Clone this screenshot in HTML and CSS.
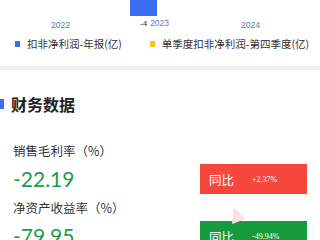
FILE: index.html
```html
<!DOCTYPE html>
<html>
<head>
<meta charset="utf-8">
<link rel="stylesheet" href="styles.css">
</head>
<body>
<div class="chart">
  <div class="plot">
    <div class="col"><div class="xlabel">2022</div></div>
    <div class="col mid">
      <div class="bar"></div>
      <div class="xrow"><span class="neg">-4</span><span class="xlabel">2023</span></div>
    </div>
    <div class="col"><div class="xlabel">2024</div></div>
  </div>
  <div class="legend">
    <div class="item"><span class="sq blue"></span>扣非净利润-年报(亿)</div>
    <div class="item"><span class="sq yellow"></span>单季度扣非净利润-第四季度(亿)</div>
  </div>
</div>
<div class="sep"></div>
<div class="section">
  <h2 class="title">财务数据</h2>
  <div class="metric">
    <div class="name">销售毛利率（%）</div>
    <div class="row">
      <div class="value">-22.19</div>
      <div class="badge up"><span class="tb">同比</span><span class="pct">+2.37%</span></div>
    </div>
  </div>
  <div class="metric">
    <div class="name">净资产收益率（%）</div>
    <div class="row">
      <div class="value">-79.95</div>
      <div class="badge down"><span class="tb">同比</span><span class="pct">-49.94%</span></div>
    </div>
  </div>
  <div class="mark"></div>
</div>
</body>
</html>
```
FILE: styles.css
```css
html, body { margin: 0; padding: 0; background: #fff; }
body { width: 320px; height: 240px; overflow: hidden; font-family: "Noto Sans CJK SC", "Noto Sans", sans-serif; position: relative; }
.chart { height: 66px; }
.plot { display: grid; grid-template-columns: 110px 100px 110px; height: 31px; }
.col { display: flex; flex-direction: column; align-items: center; justify-content: flex-end; }
.col:first-child { align-items: flex-start; padding-left: 51px; }
.col:last-child { align-items: flex-start; padding-left: 141px; margin-left: -110px; }
.mid { position: relative; align-items: flex-start; justify-content: flex-start; }
.bar { width: 27px; height: 16px; background: #3b6ff0; margin-left: 20px; }
.xrow { display: flex; align-items: flex-end; margin-left: 30px; margin-top: 1px; }
.neg { font-family: "Liberation Sans", sans-serif; font-size: 8px; color: #333; margin-right: 3px; line-height: 10px; }
.xlabel { font-family: "Liberation Sans", sans-serif; font-size: 8.5px; color: #5b7ab8; line-height: 12px; }
.legend { display: flex; padding-left: 15px; margin-top: 6px; font-size: 10.5px; color: #333; line-height: 14px; }
.item { display: flex; align-items: center; }
.item:last-child { margin-left: 28px; }
.sq { width: 5px; height: 6px; margin-right: 7px; }
.blue { background: #3b6ff0; }
.yellow { background: #f5c518; }
.sep { height: 4px; background: #f2f2f2; }
.section { position: relative; }
.title { margin: 0; font-size: 16px; font-weight: 700; color: #222; line-height: 20px; padding: 0 0 0 11px; margin-top: 24px; position: relative; }
.title::before { content: ""; position: absolute; left: 0; top: 5px; width: 4px; height: 10px; background: #3b6ff0; }
.metric { padding: 0 13px; margin-top: 29px; }
.metric + .metric { margin-top: 6px; }
.name { font-size: 12.5px; color: #333; line-height: 16px; }
.row { display: flex; align-items: center; justify-content: space-between; margin-top: 5px; }
.value { font-family: "Lato", "Noto Sans", sans-serif; font-size: 21px; color: #1e9b4c; line-height: 30px; }
.badge { width: 107px; height: 30px; display: flex; align-items: center; color: #fff; box-sizing: border-box; padding-left: 9px; margin-right: 0; }
.up { background: #f5473b; }
.down { background: #159a3c; }
.tb { font-size: 12.5px; width: 43px; }
.pct { font-family: "Liberation Serif", serif; font-size: 8px; }
.mark { position: absolute; left: 229px; top: 112px; width: 0; height: 0; border-left: 7px solid transparent; border-right: 7px solid transparent; border-bottom: 16px solid #fde0e0; transform: rotate(-20deg); }
```
